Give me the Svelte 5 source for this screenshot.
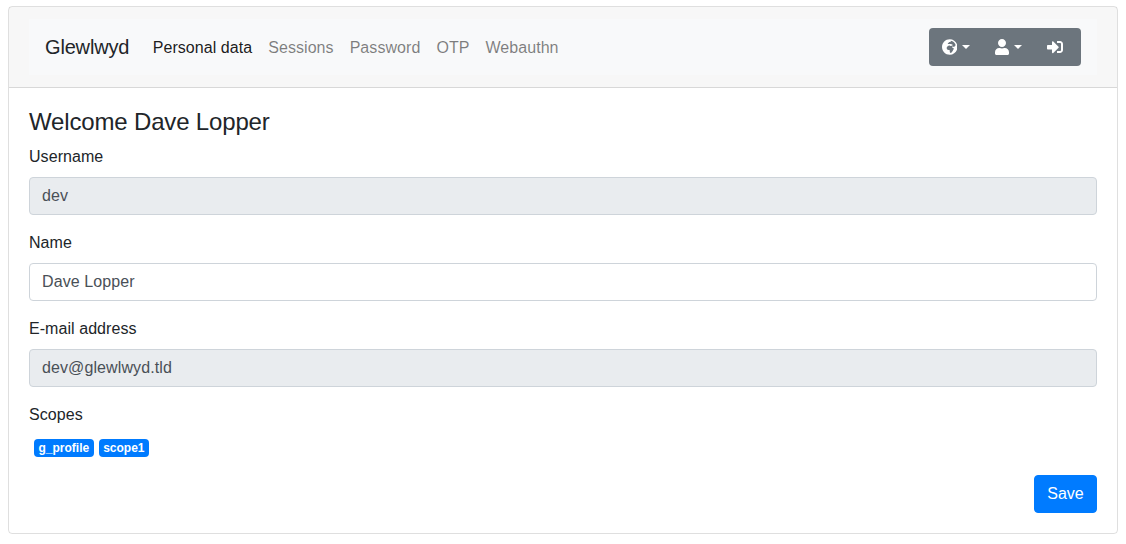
<script>
  const tabs = ['Personal data', 'Sessions', 'Password', 'OTP', 'Webauthn'];
  const scopes = ['g_profile', 'scope1'];
</script>

<div class="card">
  <div class="card-header">
    <nav class="navbar">
      <span class="brand">Glewlwyd</span>
      <ul class="nav">
        {#each tabs as t, i}
          <li class:active={i === 0}>{t}</li>
        {/each}
      </ul>
      <div class="btn-group">
        <button aria-label="Language">
          <svg width="15.5" height="16" viewBox="0 0 496 512"><path fill="currentColor" d="M248 8C111.03 8 0 119.03 0 256s111.03 248 248 248 248-111.03 248-248S384.97 8 248 8zm160 215.5v6.93c0 5.87-3.32 11.24-8.57 13.86l-15.39 7.7a15.485 15.485 0 0 1-15.53-.97l-18.21-12.14a15.52 15.52 0 0 0-13.5-1.81l-2.65.88c-9.7 3.23-13.66 14.79-7.99 23.3l13.24 19.86c2.87 4.31 7.71 6.9 12.89 6.9h8.21c8.56 0 15.5 6.94 15.5 15.5v11.34c0 3.35-1.09 6.62-3.1 9.3l-18.74 24.98c-1.42 1.9-2.39 4.1-2.83 6.43l-4.3 22.83c-.62 3.29-2.29 6.29-4.76 8.56a159.608 159.608 0 0 0-25 29.16l-13.03 19.55a27.756 27.756 0 0 1-23.09 12.36c-10.51 0-20.12-5.94-24.82-15.34a78.902 78.902 0 0 1-8.33-35.29V367.5c0-8.56-6.94-15.5-15.5-15.5h-25.88c-14.49 0-28.38-5.76-38.63-16a54.659 54.659 0 0 1-16-38.63v-14.06c0-17.19 8.1-33.38 21.85-43.7l27.58-20.69a54.663 54.663 0 0 1 32.78-10.93h.89c8.48 0 16.85 1.97 24.43 5.77l14.72 7.36c3.68 1.84 7.93 2.14 11.83.84l47.31-15.77c6.33-2.11 10.6-8.03 10.6-14.7 0-8.56-6.94-15.5-15.5-15.5h-10.09c-4.11 0-8.05-1.63-10.96-4.54l-6.92-6.92a15.493 15.493 0 0 0-10.96-4.54H199.5c-8.56 0-15.5-6.94-15.5-15.5v-4.4c0-7.11 4.84-13.31 11.74-15.04l14.45-3.61c3.74-.94 7-3.23 9.14-6.44l8.08-12.11c2.87-4.31 7.71-6.9 12.89-6.9h24.21c8.56 0 15.5-6.94 15.5-15.5v-21.7C359.23 71.63 422.86 131.02 441.93 208H423.5c-8.56 0-15.5 6.94-15.5 15.5z"/></svg>
          <span class="caret"></span>
        </button>
        <button aria-label="User">
          <svg width="14" height="16" viewBox="0 0 448 512"><path fill="currentColor" d="M224 256c70.700 0 128-57.300 128-128S294.700 0 224 0 96 57.300 96 128s57.300 128 128 128zm89.600 32h-16.700c-22.200 10.200-46.900 16-72.900 16s-50.600-5.800-72.900-16h-16.700C60.200 288 0 348.200 0 422.400V464c0 26.500 21.500 48 48 48h352c26.500 0 48-21.500 48-48v-41.600c0-74.200-60.200-134.400-134.400-134.400z"/></svg>
          <span class="caret"></span>
        </button>
        <button class="last" aria-label="Sign out">
          <svg width="16" height="16" viewBox="0 0 512 512"><path fill="currentColor" d="M416 448h-84c-6.600 0-12-5.400-12-12v-40c0-6.600 5.400-12 12-12h84c17.700 0 32-14.300 32-32V160c0-17.700-14.300-32-32-32h-84c-6.600 0-12-5.400-12-12V76c0-6.600 5.400-12 12-12h84c53 0 96 43 96 96v192c0 53-43 96-96 96zm-47-201L201 79c-15-15-41-4.500-41 17v96H24c-13.300 0-24 10.700-24 24v96c0 13.300 10.700 24 24 24h136v96c0 21.500 26 32 41 17l168-168c9.300-9.400 9.300-24.600 0-34z"/></svg>
        </button>
      </div>
    </nav>
  </div>
  <div class="card-body">
    <h4>Welcome Dave Lopper</h4>
    <div class="field">
      <label for="username">Username</label>
      <input id="username" value="dev" disabled />
    </div>
    <div class="field">
      <label for="name">Name</label>
      <input id="name" value="Dave Lopper" />
    </div>
    <div class="field">
      <label for="email">E-mail address</label>
      <input id="email" value="dev@glewlwyd.tld" disabled />
    </div>
    <div class="field">
      <span class="label">Scopes</span>
      <div class="scopes">
        {#each scopes as s}
          <span class="badge">{s}</span>
        {/each}
      </div>
    </div>
    <div class="actions">
      <button class="save">Save</button>
    </div>
  </div>
</div>

<style>
  :global(body) {
    margin: 0;
    font-family: "Liberation Sans", Arial, sans-serif;
    font-size: 16px;
    line-height: 1.5;
    letter-spacing: 0.06px;
    color: #212529;
    background: #fff;
  }
  .card {
    margin: 6px 8px 0;
    border: 1px solid rgba(0, 0, 0, 0.125);
    border-radius: 4px;
    height: 528px;
    box-sizing: border-box;
  }
  .card-header {
    padding: 12px 20px;
    height: 81px;
    box-sizing: border-box;
    background: rgba(0, 0, 0, 0.03);
    border-bottom: 1px solid rgba(0, 0, 0, 0.125);
  }
  .navbar {
    display: flex;
    align-items: center;
    height: 56px;
    padding: 0 16px;
    background: #f8f9fa;
  }
  .brand {
    font-size: 20px;
    letter-spacing: -0.17px;
    margin-right: 15.5px;
  }
  .nav {
    display: flex;
    list-style: none;
    margin: 0;
    padding: 1px 0 0;
    flex: 1;
  }
  .nav li {
    padding: 8px;
    color: rgba(0, 0, 0, 0.5);
  }
  .nav li.active {
    color: rgba(0, 0, 0, 0.9);
  }
  .btn-group {
    display: flex;
    background: #6c757d;
    border-radius: 4px;
  }
  .btn-group button {
    display: flex;
    align-items: center;
    height: 38px;
    padding: 0 12.5px 0 13px;
    background: transparent;
    border: 0;
    color: #fff;
    font: inherit;
  }
  .btn-group button.last {
    padding-right: 18px;
  }
  .caret {
    margin-left: 4.5px;
    border-top: 4.8px solid;
    border-left: 4px solid transparent;
    border-right: 4px solid transparent;
  }
  .card-body {
    padding: 20px;
  }
  h4 {
    margin: 0 0 8px;
    font-size: 24px;
    font-weight: 500;
    letter-spacing: -0.16px;
    line-height: 1.2;
  }
  .field {
    margin-bottom: 16px;
  }
  label, .label {
    display: block;
    margin-bottom: 8px;
  }
  input {
    display: block;
    width: 100%;
    height: 38px;
    box-sizing: border-box;
    padding: 6px 12px;
    font: inherit;
    letter-spacing: 0.1px;
    color: #495057;
    background: #fff;
    border: 1px solid #ced4da;
    border-radius: 4px;
  }
  input:disabled {
    background: #e9ecef;
    opacity: 1;
  }
  .scopes {
    display: flex;
    gap: 5px;
    padding: 4px 0 2px 5px;
  }
  .badge {
    padding: 3px 4.5px;
    font-size: 12px;
    font-weight: 700;
    letter-spacing: 0;
    line-height: 1;
    color: #fff;
    background: #007bff;
    border-radius: 4px;
  }
  .actions {
    display: flex;
    justify-content: flex-end;
  }
  .save {
    min-width: 63px;
    height: 38px;
    padding: 0 12px;
    font: inherit;
    color: #fff;
    background: #007bff;
    border: 1px solid #007bff;
    border-radius: 4px;
  }
</style>
